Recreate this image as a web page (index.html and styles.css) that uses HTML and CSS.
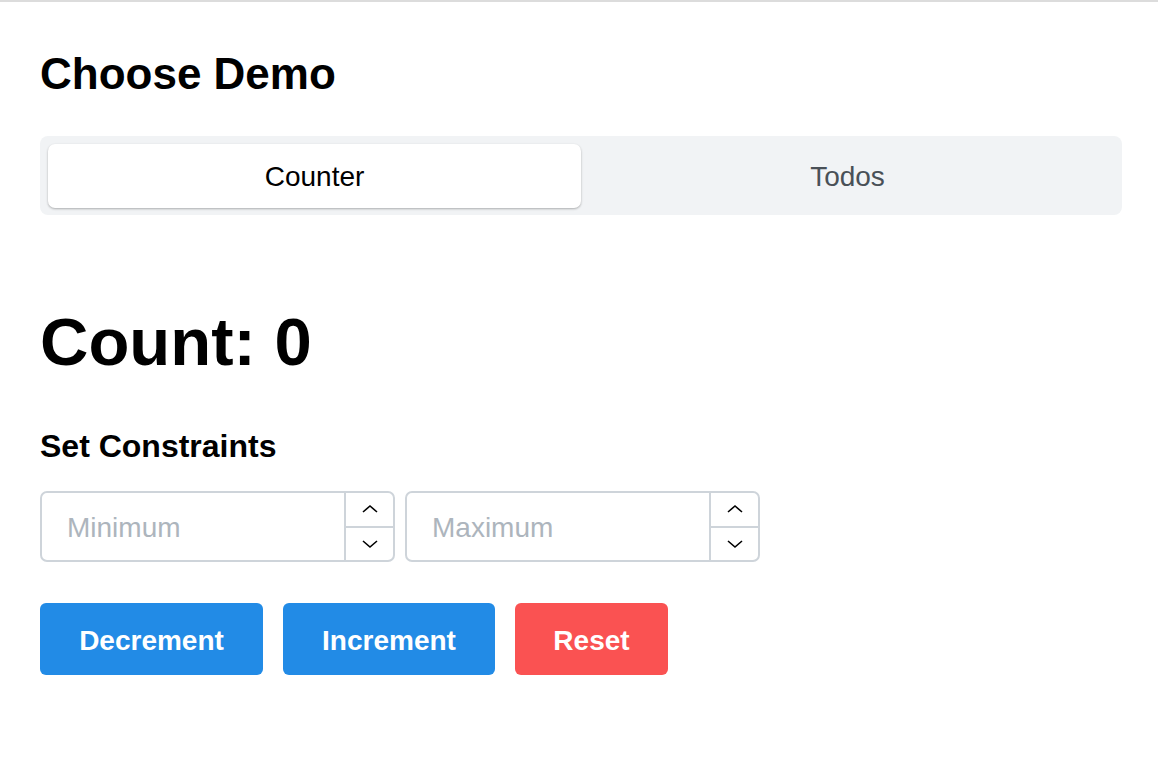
FILE: index.html
```html
<!DOCTYPE html>
<html lang="en">
<head>
<meta charset="utf-8">
<title>Choose Demo</title>
<link rel="stylesheet" href="styles.css">
</head>
<body>
<main class="page">
  <h1 class="title">Choose Demo</h1>
  <div class="tabs">
    <div class="tab tab-active">Counter</div>
    <div class="tab">Todos</div>
  </div>
  <h2 class="count">Count: 0</h2>
  <h3 class="sub">Set Constraints</h3>
  <div class="inputs">
    <div class="numfield">
      <input class="numinput" type="text" placeholder="Minimum">
      <div class="spin">
        <div class="spin-btn"><svg width="18" height="10" viewBox="0 0 18 10"><path d="M2 8 L9 2 L16 8" fill="none" stroke="#000" stroke-width="1.6"/></svg></div>
        <div class="spin-btn spin-btn-down"><svg width="18" height="10" viewBox="0 0 18 10"><path d="M2 2 L9 8 L16 2" fill="none" stroke="#000" stroke-width="1.6"/></svg></div>
      </div>
    </div>
    <div class="numfield">
      <input class="numinput" type="text" placeholder="Maximum">
      <div class="spin">
        <div class="spin-btn"><svg width="18" height="10" viewBox="0 0 18 10"><path d="M2 8 L9 2 L16 8" fill="none" stroke="#000" stroke-width="1.6"/></svg></div>
        <div class="spin-btn spin-btn-down"><svg width="18" height="10" viewBox="0 0 18 10"><path d="M2 2 L9 8 L16 2" fill="none" stroke="#000" stroke-width="1.6"/></svg></div>
      </div>
    </div>
  </div>
  <div class="buttons">
    <button class="btn btn-blue btn-dec">Decrement</button>
    <button class="btn btn-blue btn-inc">Increment</button>
    <button class="btn btn-red btn-reset">Reset</button>
  </div>
</main>
</body>
</html>
```
FILE: styles.css
```css
html, body {
  margin: 0;
  padding: 0;
  background: #ffffff;
}
body {
  border-top: 2px solid #dcdcdc;
  font-family: "Liberation Sans", Arial, Helvetica, sans-serif;
  color: #000;
  height: 776px;
}
.page {
  padding: 0 36px 0 40px;
  display: flex;
  flex-direction: column;
  align-items: flex-start;
}
.title {
  margin: 46px 0 0 0;
  font-size: 44px;
  line-height: 52px;
  font-weight: 700;
}
.tabs {
  margin-top: 36px;
  align-self: stretch;
  display: flex;
  background: #f1f3f5;
  border-radius: 8px;
  padding: 8px 8px 7px 8px;
}
.tab {
  flex: 1;
  height: 64px;
  padding-top: 2px;
  box-sizing: border-box;
  display: flex;
  align-items: center;
  justify-content: center;
  font-size: 28px;
  color: #495057;
  border-radius: 7px;
}
.tab-active {
  background: #fff;
  color: #000;
  box-shadow: 0 1px 3px rgba(0,0,0,0.12), 0 1px 2px rgba(0,0,0,0.18);
}
.count {
  margin: 89px 0 0 0;
  font-size: 67px;
  line-height: 76px;
  font-weight: 700;
}
.sub {
  margin: 47px 0 0 0;
  font-size: 32px;
  line-height: 38px;
  font-weight: 700;
}
.inputs {
  margin-top: 26px;
  display: flex;
  gap: 10px;
}
.numfield {
  width: 351px;
  height: 67px;
  border: 2px solid #ced4da;
  border-radius: 7px;
  display: flex;
  overflow: hidden;
}
.numinput {
  flex: 1;
  min-width: 0;
  border: none;
  outline: none;
  padding: 2px 0 0 25px;
  font-family: "Liberation Sans", Arial, sans-serif;
  font-size: 28px;
  color: #000;
  background: transparent;
}
.numinput::placeholder {
  color: #adb5bd;
}
.spin {
  width: 47px;
  border-left: 2px solid #ced4da;
  display: flex;
  flex-direction: column;
}
.spin-btn {
  flex: 1;
  display: flex;
  align-items: center;
  justify-content: center;
}
.spin-btn-down {
  border-top: 2px solid #ced4da;
}
.buttons {
  margin-top: 41px;
  display: flex;
  gap: 20px;
}
.btn {
  height: 72px;
  border: none;
  border-radius: 6px;
  color: #fff;
  font-family: "Liberation Sans", Arial, sans-serif;
  font-size: 28px;
  font-weight: 700;
  padding: 3px 0 0 0;
}
.btn-blue { background: #228be6; }
.btn-red { background: #fa5252; }
.btn-dec { width: 223px; }
.btn-inc { width: 212px; }
.btn-reset { width: 153px; }
```
